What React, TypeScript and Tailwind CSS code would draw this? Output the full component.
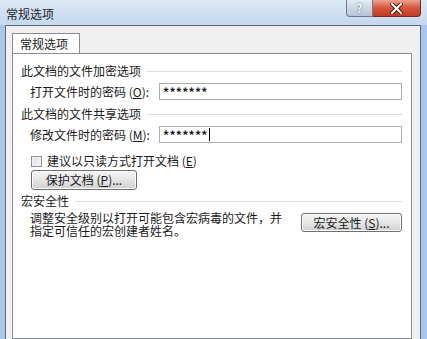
import React from 'react';

const font = { fontFamily: '"Noto Sans CJK SC", "Liberation Sans", sans-serif' };

function Heading({ text }: { text: string }) {
  return (
    <div className="flex items-center h-[16px]">
      <span className="whitespace-nowrap">{text}</span>
      <div className="flex-1 h-px bg-[#d5dfe5] ml-[6px]" />
    </div>
  );
}

function WinButton({ children, className = '' }: { children: React.ReactNode; className?: string }) {
  return (
    <div
      className={`flex items-center justify-center rounded-[3px] border border-[#707070] bg-gradient-to-b from-[#f4f4f4] via-[#e6e6e6] to-[#cfcfcf] shadow-[inset_0_0_0_1px_#fcfcfc] ${className}`}
    >
      {children}
    </div>
  );
}

function PasswordRow({ label, hotkey, caret }: { label: string; hotkey: string; caret?: boolean }) {
  return (
    <div className="flex items-center h-[17px]">
      <span className="w-[138px] pl-[9px] whitespace-nowrap">
        {label} (<span className="underline">{hotkey}</span>):
      </span>
      <div className="flex-1 h-full border border-[#abadb3] bg-white flex items-center pl-[3px] text-[12px] font-bold tracking-[0.3px]">
        *******
        {caret && <span className="inline-block w-px h-[13px] bg-black ml-px" />}
      </div>
    </div>
  );
}

export default function App() {
  return (
    <div
      className="w-[427px] h-[339px] overflow-hidden flex flex-col bg-[#a9c7ea] text-[12px] leading-[14px] text-[#1a1a1a]"
      style={font}
    >
      {/* Title bar */}
      <div className="h-[25px] flex items-start justify-between bg-gradient-to-b from-[#dce8f5] to-[#c4d8ef] pr-[6px]">
        <span className="pl-[6px] pt-[7px] text-[12px] text-[#1e1e1e]">常规选项</span>
        <div className="flex">
          <div className="w-[27px] h-[17px] rounded-bl-[4px] border border-t-0 border-[#6d7a8b] bg-gradient-to-b from-[#e4ebf3] to-[#b5c4d6] flex items-center justify-center text-white text-[12px] font-bold [text-shadow:0_0_2px_#3a4a5e]">
            ?
          </div>
          <div className="w-[48px] h-[17px] rounded-br-[4px] border border-t-0 border-l-0 border-[#7a2a1e] bg-gradient-to-b from-[#eba18c] via-[#d4543c] to-[#c23a22] flex items-center justify-center">
            <svg width="13" height="11" viewBox="0 0 13 11">
              <path d="M2 1 L11 10 M11 1 L2 10" stroke="#4a1a12" strokeWidth="4" strokeLinecap="square" />
              <path d="M2 1 L11 10 M11 1 L2 10" stroke="#ffffff" strokeWidth="2" strokeLinecap="square" />
            </svg>
          </div>
        </div>
      </div>

      {/* Client area */}
      <div className="flex-1 flex px-[5px] pr-[6px]">
        <div className="flex-1 flex flex-col border-l border-t border-r border-[#5b6b7e] bg-[#f0f0f0] pl-[6px] pr-[8px] pt-[7px]">
          {/* Tab header */}
          <div className="w-[68px] h-[21px] border border-b-0 border-[#898c95] bg-white flex items-center pl-[7px]">
            常规选项
          </div>
          {/* Tab panel */}
          <div className="flex-1 -mt-px border border-[#898c95] bg-white pl-[8px] pr-[9px] pt-[9px]">
            <Heading text="此文档的文件加密选项" />
            <div className="mt-[4px]">
              <PasswordRow label="打开文件时的密码" hotkey="O" />
            </div>
            <div className="mt-[6px]">
              <Heading text="此文档的文件共享选项" />
            </div>
            <div className="mt-[4px]">
              <PasswordRow label="修改文件时的密码" hotkey="M" caret />
            </div>

            <div className="mt-[10px] h-[16px] flex items-center pl-[10px]">
              <div className="w-[11px] h-[11px] border border-[#8f8f8f] bg-gradient-to-br from-[#dcdcdc] to-[#f8f8f8] shadow-[inset_0_0_0_1px_#f4f4f4]" />
              <span className="ml-[5px]">
                建议以只读方式打开文档 (<span className="underline">E</span>)
              </span>
            </div>

            <WinButton className="mt-[1px] ml-[10px] w-[106px] h-[20px]">
              <span>
                保护文档 (<span className="underline">P</span>)...
              </span>
            </WinButton>

            <div className="mt-[3px]">
              <Heading text="宏安全性" />
            </div>

            <div className="mt-[2px] flex justify-between items-start">
              <div className="pl-[9px] leading-[13px]">
                <div>调整安全级别以打开可能包含宏病毒的文件，并</div>
                <div>指定可信任的宏创建者姓名。</div>
              </div>
              <WinButton className="mt-[2px] w-[101px] h-[19px]">
                <span>
                  宏安全性 (<span className="underline">S</span>)...
                </span>
              </WinButton>
            </div>
          </div>
        </div>
      </div>
    </div>
  );
}
